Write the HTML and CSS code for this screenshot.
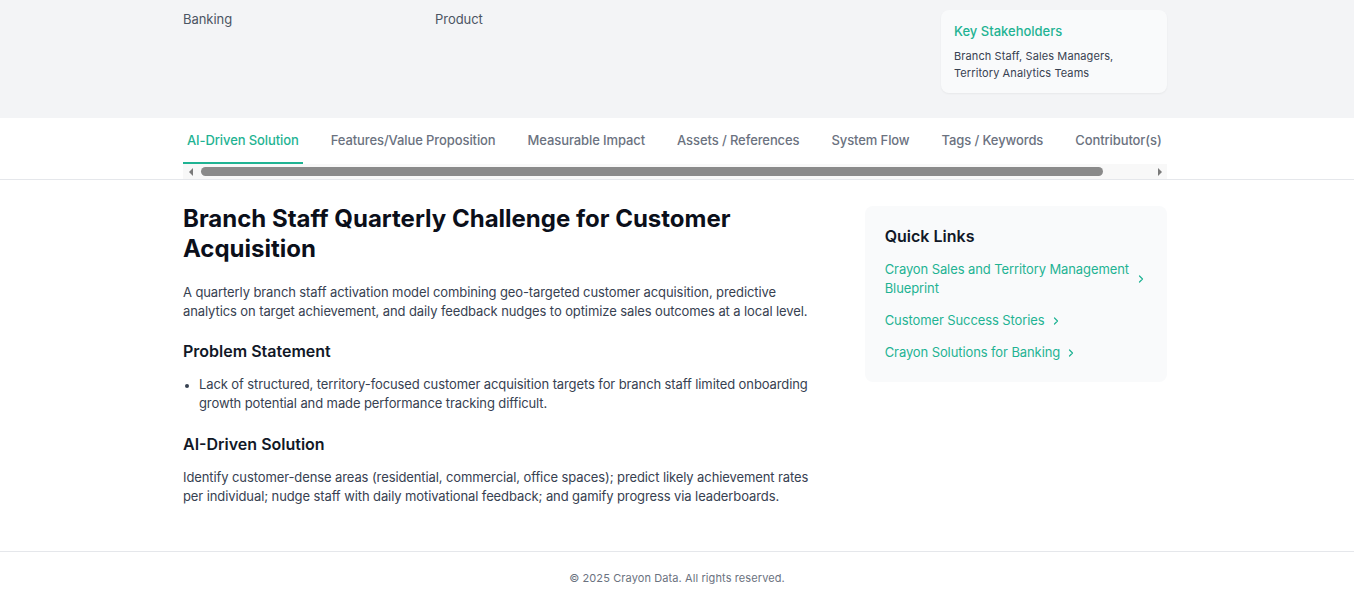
FILE: index.html
```html
<!DOCTYPE html>
<html lang="en">
<head>
<meta charset="utf-8">
<title>Branch Staff Quarterly Challenge for Customer Acquisition</title>
<link rel="stylesheet" href="styles.css">
</head>
<body>
<header class="hero">
  <div class="container hero-grid">
    <div class="meta">Banking</div>
    <div class="meta">Product</div>
    <div></div>
    <div class="stake-card">
      <div class="stake-title">Key Stakeholders</div>
      <div class="stake-text">Branch Staff, Sales Managers, Territory Analytics Teams</div>
    </div>
  </div>
</header>

<nav class="tabs-bar">
  <div class="container">
    <div class="tabs">
      <a class="tab active">AI-Driven Solution</a>
      <a class="tab">Features/Value Proposition</a>
      <a class="tab">Measurable Impact</a>
      <a class="tab">Assets / References</a>
      <a class="tab">System Flow</a>
      <a class="tab">Tags / Keywords</a>
      <a class="tab">Contributor(s)</a>
    </div>
    <div class="scrollbar">
      <span class="arrow arrow-left"></span>
      <div class="track"><div class="thumb"></div></div>
      <span class="arrow arrow-right"></span>
    </div>
  </div>
</nav>

<main class="container main-grid">
  <article class="content">
    <h1 class="title">Branch Staff Quarterly Challenge for Customer Acquisition</h1>
    <p class="text">A quarterly branch staff activation model combining geo-targeted customer acquisition, predictive analytics on target achievement, and daily feedback nudges to optimize sales outcomes at a local level.</p>
    <h2 class="subtitle">Problem Statement</h2>
    <ul class="list">
      <li>Lack of structured, territory-focused customer acquisition targets for branch staff limited onboarding growth potential and made performance tracking difficult.</li>
    </ul>
    <h2 class="subtitle">AI-Driven Solution</h2>
    <p class="text">Identify customer-dense areas (residential, commercial, office spaces); predict likely achievement rates per individual; nudge staff with daily motivational feedback; and gamify progress via leaderboards.</p>
  </article>
  <aside>
    <div class="links-card">
      <h3 class="links-title">Quick Links</h3>
      <a class="qlink"><span>Crayon Sales and Territory Management Blueprint</span><svg class="chev" viewBox="0 0 16 16"><path d="M6 4l4 4-4 4" fill="none" stroke="currentColor" stroke-width="1.6" stroke-linecap="round" stroke-linejoin="round"/></svg></a>
      <a class="qlink"><span>Customer Success Stories</span><svg class="chev" viewBox="0 0 16 16"><path d="M6 4l4 4-4 4" fill="none" stroke="currentColor" stroke-width="1.6" stroke-linecap="round" stroke-linejoin="round"/></svg></a>
      <a class="qlink"><span>Crayon Solutions for Banking</span><svg class="chev" viewBox="0 0 16 16"><path d="M6 4l4 4-4 4" fill="none" stroke="currentColor" stroke-width="1.6" stroke-linecap="round" stroke-linejoin="round"/></svg></a>
    </div>
  </aside>
</main>

<footer class="footer">© 2025 Crayon Data. All rights reserved.</footer>
</body>
</html>
```

FILE: styles.css
```css
* { box-sizing: border-box; }
html, body { margin: 0; padding: 0; }
body {
  font-family: Inter, "Noto Sans", "Liberation Sans", sans-serif;
  color: #374151;
  background: #ffffff;
}
.container {
  width: 984px;
  margin-left: calc((100% - 988px) / 2);
}

/* hero */
.hero {
  background: #f3f4f6;
  height: 118px;
}
.hero-grid {
  display: grid;
  grid-template-columns: repeat(4, 1fr);
  column-gap: 24px;
  padding-top: 10px;
}
.meta {
  font-size: 13px;
  line-height: 18px;
  color: #4b5563;
  letter-spacing: -0.05px;
}
.stake-card {
  margin-left: 2px;
  background: #f9fafb;
  border-radius: 8px;
  padding: 12px 13px 12px;
  box-shadow: 0 1px 2px rgba(0,0,0,0.05);
  height: 83px;
}
.stake-title {
  color: #1fb393;
  font-size: 13px;
  font-weight: 500;
  line-height: 18px;
  margin-bottom: 8px;
}
.stake-text {
  font-size: 11px;
  line-height: 17px;
  color: #374151;
  letter-spacing: 0.1px;
}

/* tabs */
.tabs-bar {
  background: #ffffff;
  border-bottom: 1px solid #e5e7eb;
}
.tabs {
  display: flex;
  gap: 24px;
  overflow: hidden;
  white-space: nowrap;
}
.tab {
  font-size: 13px;
  line-height: 20px;
  color: #6b7280;
  padding: 12px 4px 12px;
  border-bottom: 2px solid transparent;
  font-weight: 500;
  letter-spacing: -0.1px;
}
.tab.active {
  color: #1fb393;
  border-bottom-color: #1fb393;
}
.scrollbar {
  display: flex;
  align-items: center;
  height: 15px;
  background: #f8f8f8;
}
.arrow {
  width: 15px;
  height: 15px;
  display: flex;
  align-items: center;
  justify-content: center;
  flex: none;
}
.arrow::before {
  content: "";
  border-top: 4px solid transparent;
  border-bottom: 4px solid transparent;
}
.arrow-left::before { border-right: 4px solid #7a7a7a; }
.arrow-right::before { border-left: 4px solid #7a7a7a; }
.track {
  flex: 1;
  height: 15px;
  display: flex;
  align-items: center;
  padding-left: 3px;
  padding-right: 49px;
}
.thumb {
  height: 9px;
  width: 100%;
  background: #8a8a8a;
  border-radius: 5px;
}

/* main */
.main-grid {
  display: grid;
  grid-template-columns: 642.7fr 301.3fr;
  column-gap: 40px;
  padding-top: 24px;
  padding-bottom: 26px;
}
.title {
  margin: 0 0 19px;
  font-size: 24px;
  line-height: 30px;
  font-weight: 700;
  color: #0b0f1a;
}
.text {
  margin: 0 0 19px;
  font-size: 13px;
  line-height: 19px;
  color: #374151;
  letter-spacing: -0.1px;
}
.subtitle {
  margin: 0 0 13px;
  font-size: 16px;
  line-height: 22px;
  font-weight: 600;
  color: #111827;
}
.list {
  margin: 0 0 20px;
  padding-left: 16px;
  font-size: 13px;
  line-height: 19px;
  color: #374151;
  letter-spacing: -0.1px;
}
.list li::marker { font-size: 11px; }

.links-card {
  background: #f9fafb;
  border-radius: 8px;
  padding: 20px;
  margin-top: 2px;
  margin-left: -1px;
}
.links-title {
  margin: 0 0 14px;
  font-size: 16px;
  line-height: 20px;
  font-weight: 600;
  color: #111827;
}
.qlink {
  display: flex;
  align-items: center;
  gap: 5px;
  color: #1fb393;
  font-size: 13px;
  line-height: 19px;
  margin-bottom: 13px;
  width: fit-content;
  letter-spacing: -0.1px;
}
.qlink:last-child { margin-bottom: 0; }
.chev {
  width: 12px;
  height: 12px;
  flex: none;
}

.footer {
  border-top: 1px solid #e5e7eb;
  text-align: center;
  font-size: 11px;
  line-height: 16px;
  color: #6b7280;
  letter-spacing: 0.1px;
  padding: 18px 0 30px;
}
```
